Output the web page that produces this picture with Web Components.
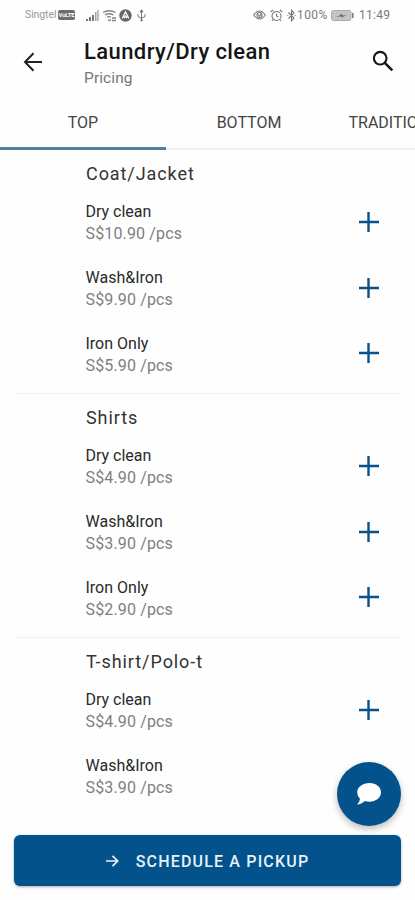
<!DOCTYPE html>
<html lang="en">
<head>
<meta charset="utf-8">
<title>Laundry/Dry clean</title>
<style>
html,body{margin:0;background:#fefefe}
body{width:415px;height:900px;overflow:hidden;font-family:Roboto,"Liberation Sans",sans-serif}
</style>
</head>
<body>
<laundry-app></laundry-app>
<script>
const define = (name, html) => {
  const t = document.createElement('template');
  t.innerHTML = html;
  customElements.define(name, class extends HTMLElement {
    constructor() {
      super();
      this.attachShadow({mode: 'open'}).append(t.content.cloneNode(true));
    }
  });
};

define('status-bar', `<style>
:host{display:flex;align-items:center;height:30px;box-sizing:border-box;padding:0 23px 0 25px;color:#7a7a7a;font-size:12px;line-height:14px}
svg{display:block;flex:none}
.carrier{font-size:10.5px;color:#999;width:33px;letter-spacing:-.1px}
.volte{background:#6d6d6d;color:#fff;font-size:6px;line-height:10px;height:10px;width:17px;border-radius:2px;text-align:center;font-weight:700;letter-spacing:-.2px}
.gap{flex:1}
</style>
<span class="carrier">Singtel</span><span class="volte">VoLTE</span>
<svg style="margin-left:10px" width="15" height="13" viewBox="0 0 15 13"><path d="M1 12v-2h2v2zM4 12V8h2v4zM7 12V6h2v6z" fill="#777"/><path d="M10 12V3h1.5v9zM12.3 12V1h1.4v11z" fill="#a5a5a5"/></svg>
<svg style="margin-left:2px" width="15" height="13" viewBox="0 0 15 13" fill="none" stroke="#858585" stroke-width="1.3"><path d="M1 3.5Q7 0 13.5 3.5M3 6Q7 3.5 11.5 6M5 8.3Q7 7 9 8.3M6 10.4l1.5 1.3L9 10.4M10 9h4M10 11.5h4"/></svg>
<svg style="margin-left:2px" width="13" height="13" viewBox="0 0 13 13"><circle cx="6.5" cy="6.5" r="6.2" fill="#666"/><path d="M3.2 9.5 6.5 3l3.3 6.5M5 9l1.5-2L8 9" stroke="#fff" stroke-width="1.3" fill="none"/></svg>
<svg style="margin-left:5px" width="9" height="13" viewBox="0 0 9 13" fill="none" stroke="#777"><path d="M4.5 1v11M1 5v2.5l3.5 1.8L8 7.5V5"/><path d="M3 3 4.5.8 6 3z" fill="#777"/><circle cx="4.5" cy="11.3" r=".8"/></svg>
<span class="gap"></span>
<svg width="13" height="12" viewBox="0 0 13 12" fill="none" stroke="#777" stroke-width="1.1"><path d="M.7 6Q6.5-2 12.3 6 6.5 14 .7 6z"/><circle cx="6.5" cy="6" r="2.5"/><path d="m5.3 5.5 1.3 1.4 2-2.4"/></svg>
<svg style="margin-left:4px" width="13" height="13" viewBox="0 0 13 13" fill="none" stroke="#777" stroke-width="1.1"><circle cx="6.5" cy="7" r="4.5"/><path d="M6.5 4.5V7l2 1M.7 3 3.2.8M12.3 3 9.8.8M3.3 10.5 2 12M9.7 10.5 11 12"/></svg>
<svg style="margin-left:4px" width="9" height="13" viewBox="0 0 9 13" fill="none" stroke="#777" stroke-width="1.1"><path d="m1.500 3.500 5.500 5.500L4.500 11.800V1.200L7 4 1.500 9.500M.3 6.500h1M7.700 6.500h1"/></svg>
<span style="margin-left:1px;width:32px;letter-spacing:.4px">100%</span>
<svg style="margin-left:2px" width="23" height="11" viewBox="0 0 23 11"><rect x=".5" y=".5" width="19.5" height="10" rx="2" fill="#c4c4c4" stroke="#ababab"/><rect x="21" y="3" width="1.5" height="5" fill="#777"/><path d="M5 6.500 9 5.500 11 3.500v2h5l-4 1-1 1.500v-1.500z" fill="#555"/></svg>
<span style="margin-left:5px;width:33px;letter-spacing:.25px;white-space:nowrap">11:49</span>`);

define('app-header', `<style>
:host{display:flex;height:68px;box-sizing:border-box;padding:0 20px 0 21px;align-items:flex-start}
svg{display:block;flex:none;margin-top:20px}
.titles{flex:1;margin-left:39px;padding-top:8px}
h1{margin:0;font-size:22px;line-height:28px;font-weight:500;color:#151515;letter-spacing:.41px}
p{margin:2px 0 0;font-size:15.5px;line-height:20px;color:#777;letter-spacing:.1px}
</style>
<svg width="24" height="24" viewBox="0 0 24 24" fill="none" stroke="#222" stroke-width="2"><path d="M21 12H4.500M12.500 3.300 4 12l8.500 8.700"/></svg>
<div class="titles"><h1><slot name="title"></slot></h1><p><slot name="subtitle"></slot></p></div>
<svg style="margin-top:19px" width="24" height="24" viewBox="0 0 24 24" fill="none" stroke="#151515"><circle cx="9.200" cy="9.200" r="6.300" stroke-width="2.100"/><path d="m13.800 13.800 7.500 7.500" stroke-width="2.600"/></svg>`);

define('tab-bar', `<style>
:host{display:flex;height:52px;overflow:hidden;box-shadow:inset 0 -2px #f0f1f2}
</style><slot></slot>`);

define('tab-item', `<style>
:host{display:block;flex:none;min-width:166px;height:52px;box-sizing:border-box;padding:0 16.5px;text-align:center;font-size:16px;line-height:50px;color:#444;white-space:nowrap}
:host([active]){border-bottom:3px solid #4f809f}
</style><slot></slot>`);

define('price-section', `<style>
:host{display:block;height:244px;box-sizing:border-box;border-bottom:1px solid #f2f2f2;margin:0 14px 0 15px}
h2{margin:0;height:40px;padding:0 0 0 71px;font-size:18px;line-height:48px;font-weight:400;color:#333;letter-spacing:.92px;box-sizing:border-box}
</style><h2><slot name="heading"></slot></h2><slot></slot>`);

define('price-row', `<style>
:host{display:flex;height:65.8px;align-items:center;padding:0 22px 0 71px}
div{flex:1;font-size:16px;line-height:22px;margin-left:-.5px;padding-top:.4px}
.name{display:block;color:#2a2a2a}
.price{display:block;color:#808080;letter-spacing:.15px}
svg{display:block;flex:none;margin-bottom:2px}
</style><div><span class="name"><slot></slot></span><span class="price"><slot name="price"></slot></span></div>
<svg width="20" height="20" viewBox="0 0 20 20"><path d="M9.500 0v20M0 10h20" stroke="#08518a" stroke-width="2.400"/></svg>`);

define('pickup-button', `<style>
:host{display:flex;align-items:center;justify-content:center;height:51px;box-sizing:border-box;padding-top:1px;margin:0 14px;background:#03528c;border-radius:6px;box-shadow:0 1px 3px #0005;color:#e6f2fa;font-size:16px;font-weight:500;letter-spacing:1.17px}
svg{margin-right:17px}
</style><svg width="13" height="12" viewBox="0 0 13 12" fill="none" stroke="#e6f2fa" stroke-width="1.700"><path d="M0 6h11.500M6.500.8 11.700 6l-5.200 5.200"/></svg><slot></slot>`);

define('chat-fab', `<style>
:host{position:absolute;left:337px;top:762px;width:64px;height:64px;border-radius:50%;background:#03528c;box-shadow:0 3px 7px #0004;display:grid;place-items:center}
</style><svg width="26" height="24" viewBox="0 0 26 24"><path d="M13.500 1C20 1 25 5 25 10.300S20 19.700 13.500 19.700q-2.500 0-4.800-.8Q5.500 22.300 1 22.500q2.800-2.500 3-5.700Q1.200 14 1.200 10.300C1.200 5 7 1 13.500 1z" fill="#fff"/></svg>`);

define('laundry-app', `<style>
:host{display:flex;flex-direction:column;position:relative;width:415px;height:900px;overflow:hidden}
main{height:685px;overflow:hidden;flex:none}
tab-item:last-of-type{text-align:left}
</style>
<status-bar></status-bar>
<app-header><span slot="title">Laundry/Dry clean</span><span slot="subtitle">Pricing</span></app-header>
<tab-bar><tab-item active>TOP</tab-item><tab-item>BOTTOM</tab-item><tab-item>TRADITIONAL</tab-item></tab-bar>
<main>
<price-section><span slot="heading">Coat/Jacket</span>
<price-row>Dry clean<span slot="price">S$10.90 /pcs</span></price-row>
<price-row>Wash&amp;Iron<span slot="price">S$9.90 /pcs</span></price-row>
<price-row>Iron Only<span slot="price">S$5.90 /pcs</span></price-row></price-section>
<price-section><span slot="heading">Shirts</span>
<price-row>Dry clean<span slot="price">S$4.90 /pcs</span></price-row>
<price-row>Wash&amp;Iron<span slot="price">S$3.90 /pcs</span></price-row>
<price-row>Iron Only<span slot="price">S$2.90 /pcs</span></price-row></price-section>
<price-section><span slot="heading">T-shirt/Polo-t</span>
<price-row>Dry clean<span slot="price">S$4.90 /pcs</span></price-row>
<price-row>Wash&amp;Iron<span slot="price">S$3.90 /pcs</span></price-row></price-section>
</main>
<pickup-button>SCHEDULE A PICKUP</pickup-button>
<chat-fab></chat-fab>`);
</script>
</body>
</html>
